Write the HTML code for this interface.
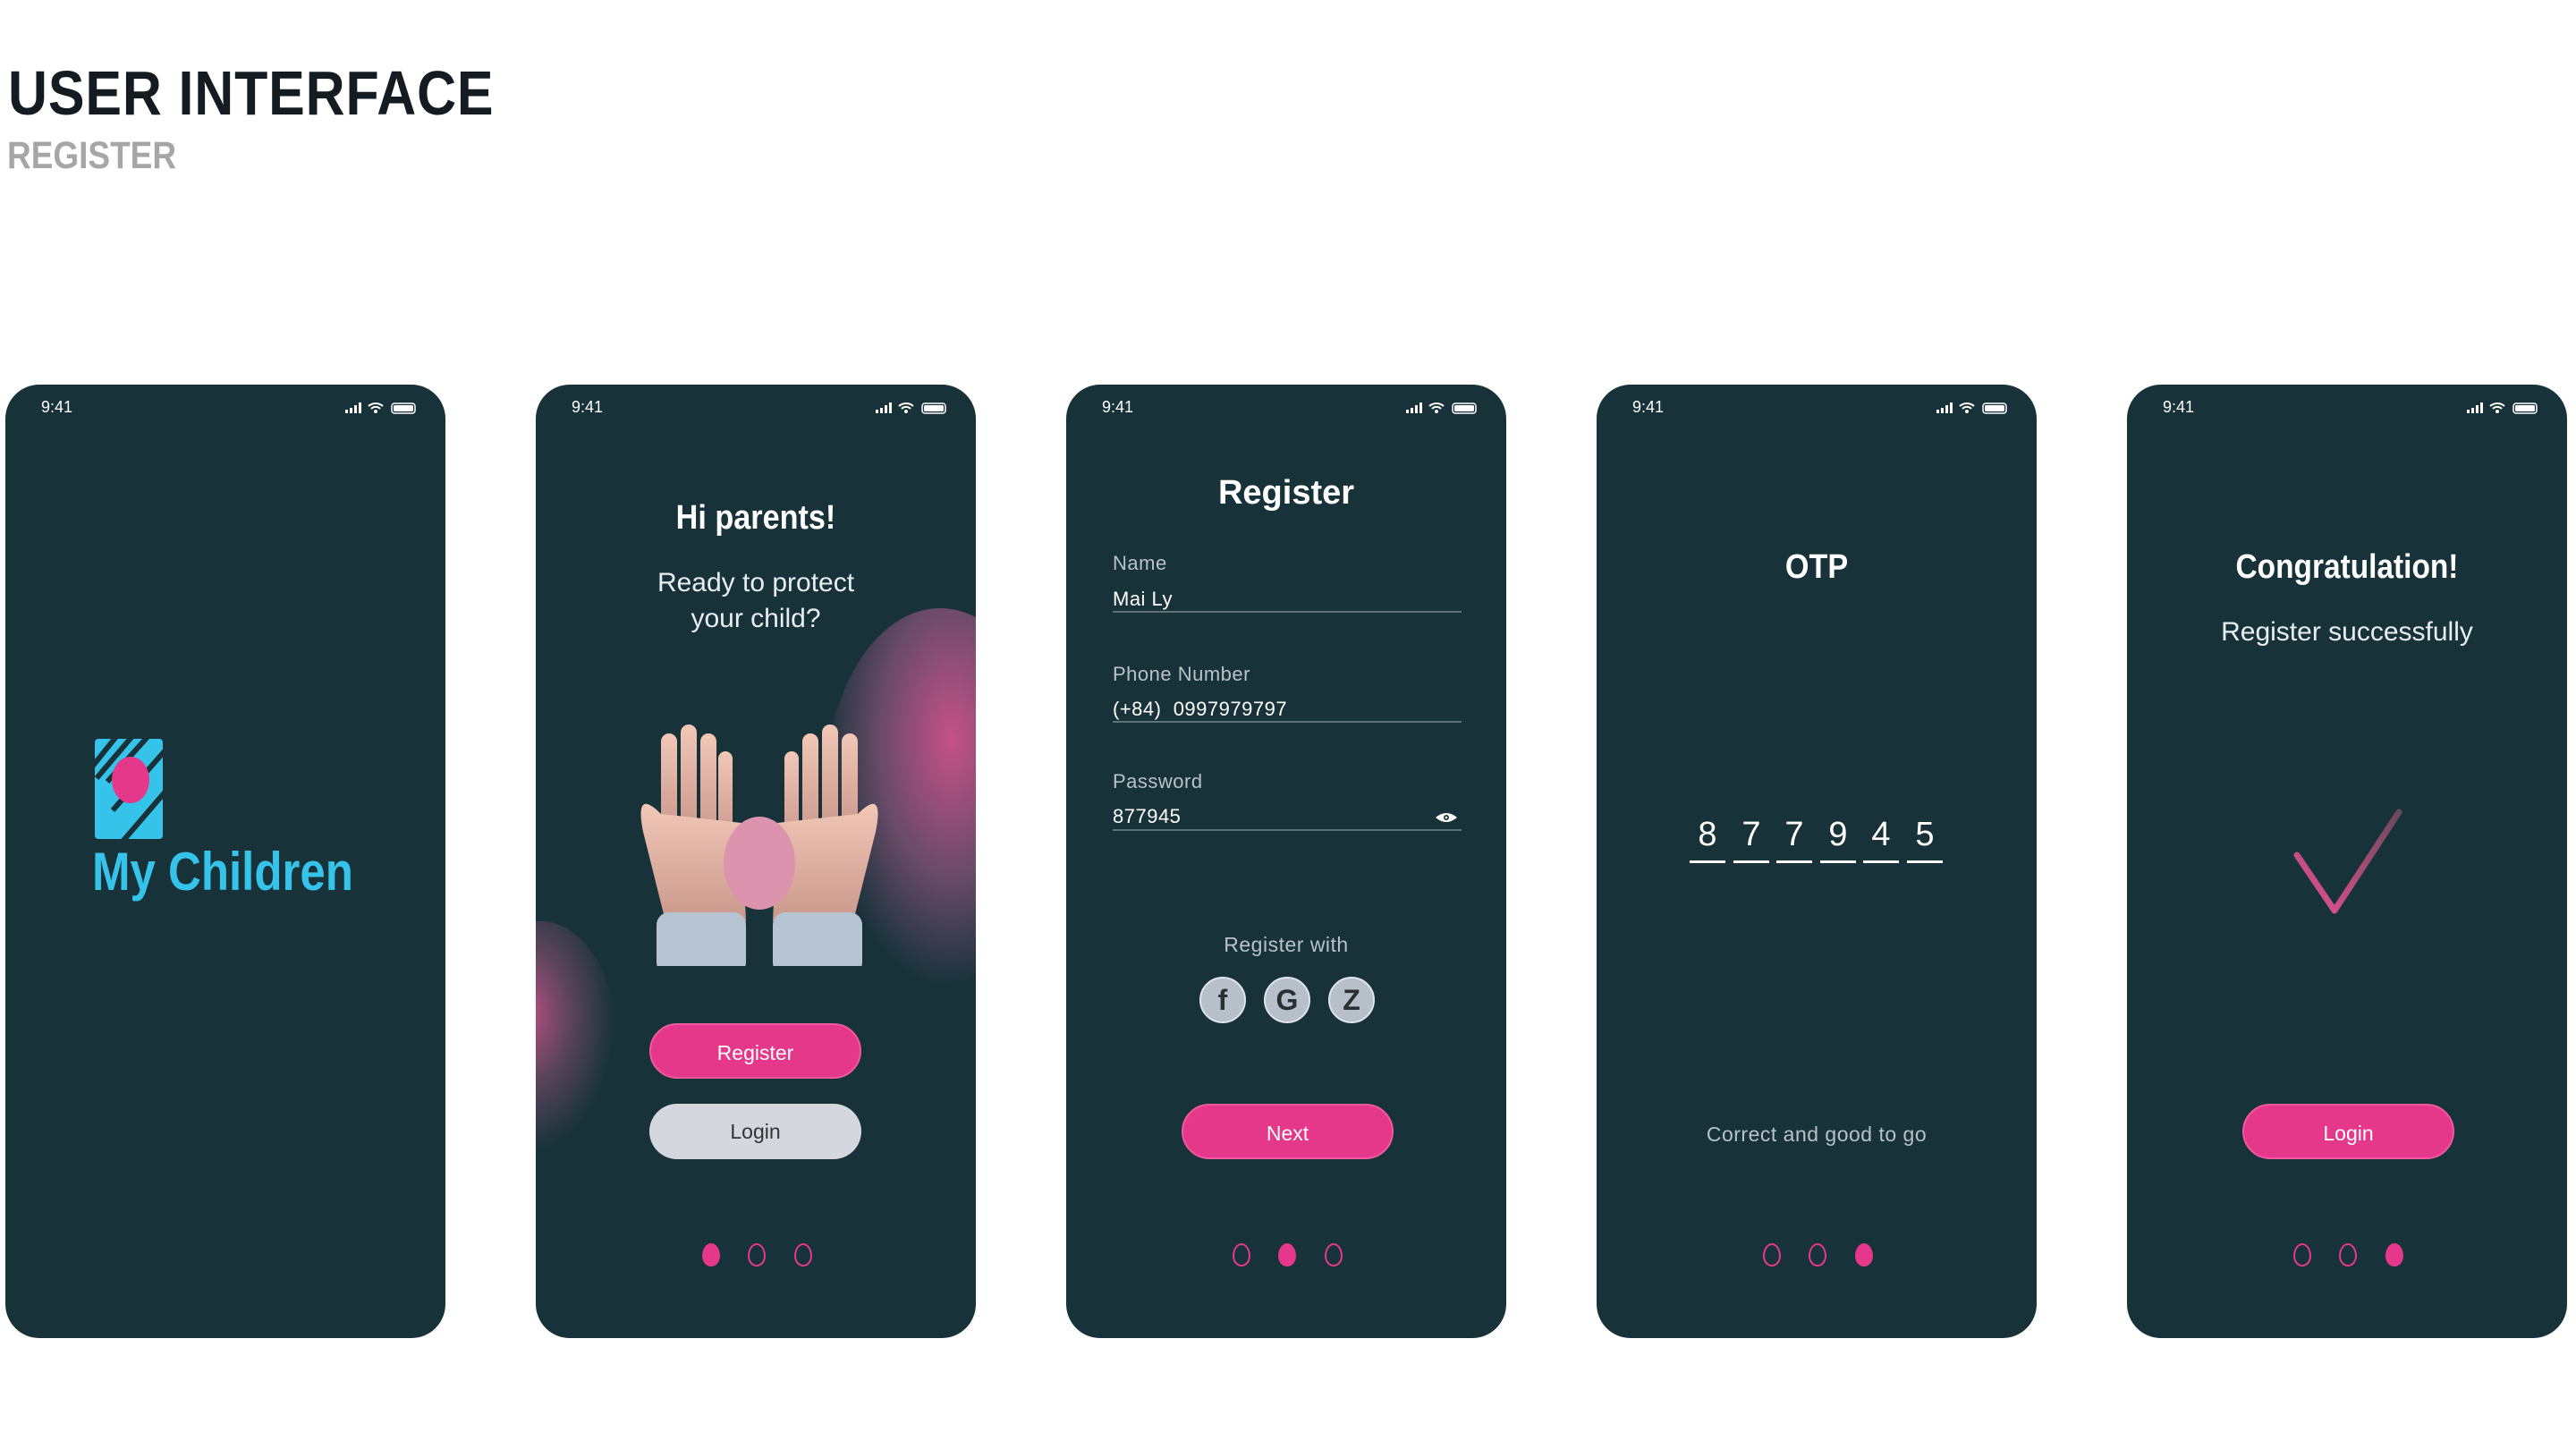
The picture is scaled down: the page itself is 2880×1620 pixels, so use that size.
<!DOCTYPE html>
<html><head><meta charset="utf-8"><style>
*{margin:0;padding:0;box-sizing:border-box}
body{width:2880px;height:1620px;background:#fff;position:relative;overflow:hidden;font-family:"Liberation Sans","DejaVu Sans",sans-serif}
.t1{position:absolute;left:9px;top:64px;font-size:70px;font-weight:bold;color:#141c22;transform:scaleX(.87);transform-origin:left top;letter-spacing:1px}
.t2{position:absolute;left:8px;top:150px;font-size:43px;font-weight:bold;color:#a6a6a6;transform:scaleX(.86);transform-origin:left top}
.ph{position:absolute;top:430px;width:492px;height:1066px;background:#18323a;border-radius:38px;overflow:hidden;color:#fff}
.time{position:absolute;left:40px;top:15px;font-size:18px;color:#fff}
.sb{position:absolute;right:22px;top:18px}
.c{position:absolute;left:0;width:100%;text-align:center}
.h{font-weight:bold;font-size:38px}
.sub{font-size:30px;color:#e8eef0;line-height:40px}
.btn{position:absolute;height:62px;border-radius:31px;text-align:center;line-height:62px;font-size:23px}
.pk{background:#e6388a;color:#fff;border:2px solid #f05a9c}
.dots{position:absolute;top:960px;left:0;width:100%}
.d{position:absolute;width:20px;height:26px;border:2px solid #e6388a;border-radius:50%/55% 55% 45% 45%}
.d.f{background:#e6388a}
.lab{position:absolute;left:52px;font-size:22px;color:#b8c2c6;letter-spacing:.5px}
.val{position:absolute;left:52px;font-size:22px;color:#fff;letter-spacing:.5px}
.ln{position:absolute;left:52px;width:390px;height:2px;background:#5e7379}
.soc{position:absolute;width:52px;height:52px;border-radius:50%;background:#b7bfc9;border:2px solid #dfe4ea;color:#2a2f33;font-weight:bold;font-size:32px;text-align:center;line-height:48px}
.dig{position:absolute;width:40px;text-align:center;font-size:38px;top:482px}
.ul{position:absolute;width:40px;height:3px;background:#fff;top:532px}
</style></head><body>
<div class="t1">USER INTERFACE</div>
<div class="t2">REGISTER</div>

<div class="ph" style="left:6px">
 <div class="time">9:41</div>
 <svg class="sb" width="90" height="16" viewBox="0 0 90 16"><g fill="#fff"><rect x="0" y="10" width="3" height="4"/><rect x="5" y="8" width="3" height="6"/><rect x="10" y="5" width="3" height="9"/><rect x="15" y="2" width="3" height="12"/></g><path d="M26 6a12 12 0 0 1 16 0M29 9a7 7 0 0 1 10 0" stroke="#fff" stroke-width="2" fill="none"/><circle cx="34" cy="12" r="2" fill="#fff"/><rect x="52" y="3" width="26" height="11" rx="3" fill="none" stroke="#fff" stroke-width="1.5"/><rect x="54" y="5" width="22" height="7" rx="1.5" fill="#fff"/></svg>
 <svg style="position:absolute;left:100px;top:396px" width="76" height="112" viewBox="0 0 76 112"><defs><clipPath id="cl"><rect width="76" height="112" rx="4"/></clipPath></defs><g clip-path="url(#cl)"><rect width="76" height="112" fill="#35c3ea"/><g stroke="#18323a" stroke-width="6"><line x1="-10" y1="40" x2="30" y2="-10"/><line x1="2" y1="44" x2="48" y2="-10"/><line x1="14" y1="48" x2="66" y2="-10"/><line x1="20" y1="80" x2="90" y2="0"/><line x1="30" y1="116" x2="90" y2="46"/></g><ellipse cx="40" cy="46" rx="21" ry="26" fill="#e6388a"/></g></svg>
 <div style="position:absolute;left:97px;top:510px;font-size:60px;font-weight:bold;color:#35c3ea;transform:scaleX(.85);transform-origin:left top;white-space:nowrap">My Children</div>
</div>

<div class="ph" style="left:599px">
 <div style="position:absolute;right:-90px;top:250px;width:260px;height:420px;border-radius:50%;background:radial-gradient(ellipse at 55% 35%,rgba(215,85,145,.9) 0%,rgba(170,95,140,.55) 40%,rgba(24,50,58,0) 72%)"></div>
 <div style="position:absolute;left:-80px;top:600px;width:170px;height:260px;border-radius:50%;background:radial-gradient(ellipse at 40% 40%,rgba(215,85,145,.85) 0%,rgba(190,95,140,.4) 35%,rgba(24,50,58,0) 70%)"></div>
 <div class="time">9:41</div>
 <svg class="sb" width="90" height="16" viewBox="0 0 90 16"><g fill="#fff"><rect x="0" y="10" width="3" height="4"/><rect x="5" y="8" width="3" height="6"/><rect x="10" y="5" width="3" height="9"/><rect x="15" y="2" width="3" height="12"/></g><path d="M26 6a12 12 0 0 1 16 0M29 9a7 7 0 0 1 10 0" stroke="#fff" stroke-width="2" fill="none"/><circle cx="34" cy="12" r="2" fill="#fff"/><rect x="52" y="3" width="26" height="11" rx="3" fill="none" stroke="#fff" stroke-width="1.5"/><rect x="54" y="5" width="22" height="7" rx="1.5" fill="#fff"/></svg>
 <div class="c h" style="top:128px;transform:scaleX(.9)">Hi parents!</div>
 <div class="c sub" style="top:202px">Ready to protect<br>your child?</div>
 <svg style="position:absolute;left:100px;top:350px" width="300" height="300" viewBox="0 0 300 300"><defs><linearGradient id="sk" x1="0" y1="0" x2="0" y2="1"><stop offset="0" stop-color="#f2c7b6"/><stop offset="1" stop-color="#c9988c"/></linearGradient></defs>
 <g fill="url(#sk)"><rect x="40" y="40" width="18" height="110" rx="9"/><rect x="62" y="30" width="18" height="120" rx="9"/><rect x="84" y="40" width="18" height="115" rx="9"/><rect x="104" y="60" width="16" height="100" rx="8"/><rect x="178" y="60" width="16" height="100" rx="8"/><rect x="198" y="40" width="18" height="115" rx="9"/><rect x="220" y="30" width="18" height="120" rx="9"/><rect x="242" y="40" width="18" height="110" rx="9"/><path d="M40 130 Q10 100 20 150 L45 250 L135 250 L130 140Z"/><path d="M260 130 Q290 100 280 150 L255 250 L165 250 L170 140Z"/></g>
 <ellipse cx="150" cy="185" rx="40" ry="52" fill="#dc93ad"/>
 <rect x="35" y="240" width="100" height="70" rx="14" fill="#b6c3d1"/><rect x="165" y="240" width="100" height="70" rx="14" fill="#b6c3d1"/></svg>
 <div class="btn pk" style="left:127px;top:714px;width:237px">Register</div>
 <div class="btn" style="left:127px;top:804px;width:237px;background:#d4d8de;color:#333">Login</div>
 <div class="dots"><div class="d f" style="left:186px"></div><div class="d" style="left:237px"></div><div class="d" style="left:289px"></div></div>
</div>

<div class="ph" style="left:1192px">
 <div class="time">9:41</div>
 <svg class="sb" width="90" height="16" viewBox="0 0 90 16"><g fill="#fff"><rect x="0" y="10" width="3" height="4"/><rect x="5" y="8" width="3" height="6"/><rect x="10" y="5" width="3" height="9"/><rect x="15" y="2" width="3" height="12"/></g><path d="M26 6a12 12 0 0 1 16 0M29 9a7 7 0 0 1 10 0" stroke="#fff" stroke-width="2" fill="none"/><circle cx="34" cy="12" r="2" fill="#fff"/><rect x="52" y="3" width="26" height="11" rx="3" fill="none" stroke="#fff" stroke-width="1.5"/><rect x="54" y="5" width="22" height="7" rx="1.5" fill="#fff"/></svg>
 <div class="c h" style="top:100px">Register</div>
 <div class="lab" style="top:187px">Name</div><div class="val" style="top:227px">Mai Ly</div><div class="ln" style="top:253px"></div>
 <div class="lab" style="top:311px">Phone Number</div><div class="val" style="top:350px">(+84)&nbsp; 0997979797</div><div class="ln" style="top:376px"></div>
 <div class="lab" style="top:431px">Password</div><div class="val" style="top:470px">877945</div><div class="ln" style="top:497px"></div>
 <svg style="position:absolute;left:412px;top:477px" width="26" height="14" viewBox="0 0 26 14"><path d="M1 7Q13 -3 25 7Q13 17 1 7Z" fill="#fff"/><circle cx="13" cy="7" r="3" fill="#18323a"/><circle cx="13" cy="7" r="1.3" fill="#fff"/></svg>
 <div class="c" style="top:613px;font-size:23px;color:#b8c2c6;letter-spacing:.5px">Register with</div>
 <div class="soc" style="left:149px;top:662px">f</div><div class="soc" style="left:221px;top:662px">G</div><div class="soc" style="left:293px;top:662px">Z</div>
 <div class="btn pk" style="left:129px;top:804px;width:237px">Next</div>
 <div class="dots"><div class="d" style="left:186px"></div><div class="d f" style="left:237px"></div><div class="d" style="left:289px"></div></div>
</div>

<div class="ph" style="left:1785px">
 <div class="time">9:41</div>
 <svg class="sb" width="90" height="16" viewBox="0 0 90 16"><g fill="#fff"><rect x="0" y="10" width="3" height="4"/><rect x="5" y="8" width="3" height="6"/><rect x="10" y="5" width="3" height="9"/><rect x="15" y="2" width="3" height="12"/></g><path d="M26 6a12 12 0 0 1 16 0M29 9a7 7 0 0 1 10 0" stroke="#fff" stroke-width="2" fill="none"/><circle cx="34" cy="12" r="2" fill="#fff"/><rect x="52" y="3" width="26" height="11" rx="3" fill="none" stroke="#fff" stroke-width="1.5"/><rect x="54" y="5" width="22" height="7" rx="1.5" fill="#fff"/></svg>
 <div class="c h" style="top:183px;transform:scaleX(.9)">OTP</div>
 <div class="dig" style="left:104px">8</div><div class="dig" style="left:153px">7</div><div class="dig" style="left:201px">7</div><div class="dig" style="left:250px">9</div><div class="dig" style="left:298px">4</div><div class="dig" style="left:347px">5</div>
 <div class="ul" style="left:104px"></div><div class="ul" style="left:153px"></div><div class="ul" style="left:201px"></div><div class="ul" style="left:250px"></div><div class="ul" style="left:298px"></div><div class="ul" style="left:347px"></div>
 <div class="c" style="top:825px;font-size:23px;color:#b8c2c6;letter-spacing:.5px">Correct and good to go</div>
 <div class="dots"><div class="d" style="left:186px"></div><div class="d" style="left:237px"></div><div class="d f" style="left:289px"></div></div>
</div>

<div class="ph" style="left:2378px">
 <div class="time">9:41</div>
 <svg class="sb" width="90" height="16" viewBox="0 0 90 16"><g fill="#fff"><rect x="0" y="10" width="3" height="4"/><rect x="5" y="8" width="3" height="6"/><rect x="10" y="5" width="3" height="9"/><rect x="15" y="2" width="3" height="12"/></g><path d="M26 6a12 12 0 0 1 16 0M29 9a7 7 0 0 1 10 0" stroke="#fff" stroke-width="2" fill="none"/><circle cx="34" cy="12" r="2" fill="#fff"/><rect x="52" y="3" width="26" height="11" rx="3" fill="none" stroke="#fff" stroke-width="1.5"/><rect x="54" y="5" width="22" height="7" rx="1.5" fill="#fff"/></svg>
 <div class="c h" style="top:183px;transform:scaleX(.88)">Congratulation!</div>
 <div class="c sub" style="top:257px">Register successfully</div>
 <svg style="position:absolute;left:170px;top:460px" width="150" height="150" viewBox="0 0 150 150"><defs><linearGradient id="ck" x1="0" y1="1" x2="1" y2="0"><stop offset="0" stop-color="#e6508f"/><stop offset="1" stop-color="#6a4a5a"/></linearGradient></defs><path d="M20 66 L62 128 L134 18" fill="none" stroke="url(#ck)" stroke-width="7" stroke-linecap="round" stroke-linejoin="round"/></svg>
 <div class="btn pk" style="left:129px;top:804px;width:237px">Login</div>
 <div class="dots"><div class="d" style="left:186px"></div><div class="d" style="left:237px"></div><div class="d f" style="left:289px"></div></div>
</div>
</body></html>
